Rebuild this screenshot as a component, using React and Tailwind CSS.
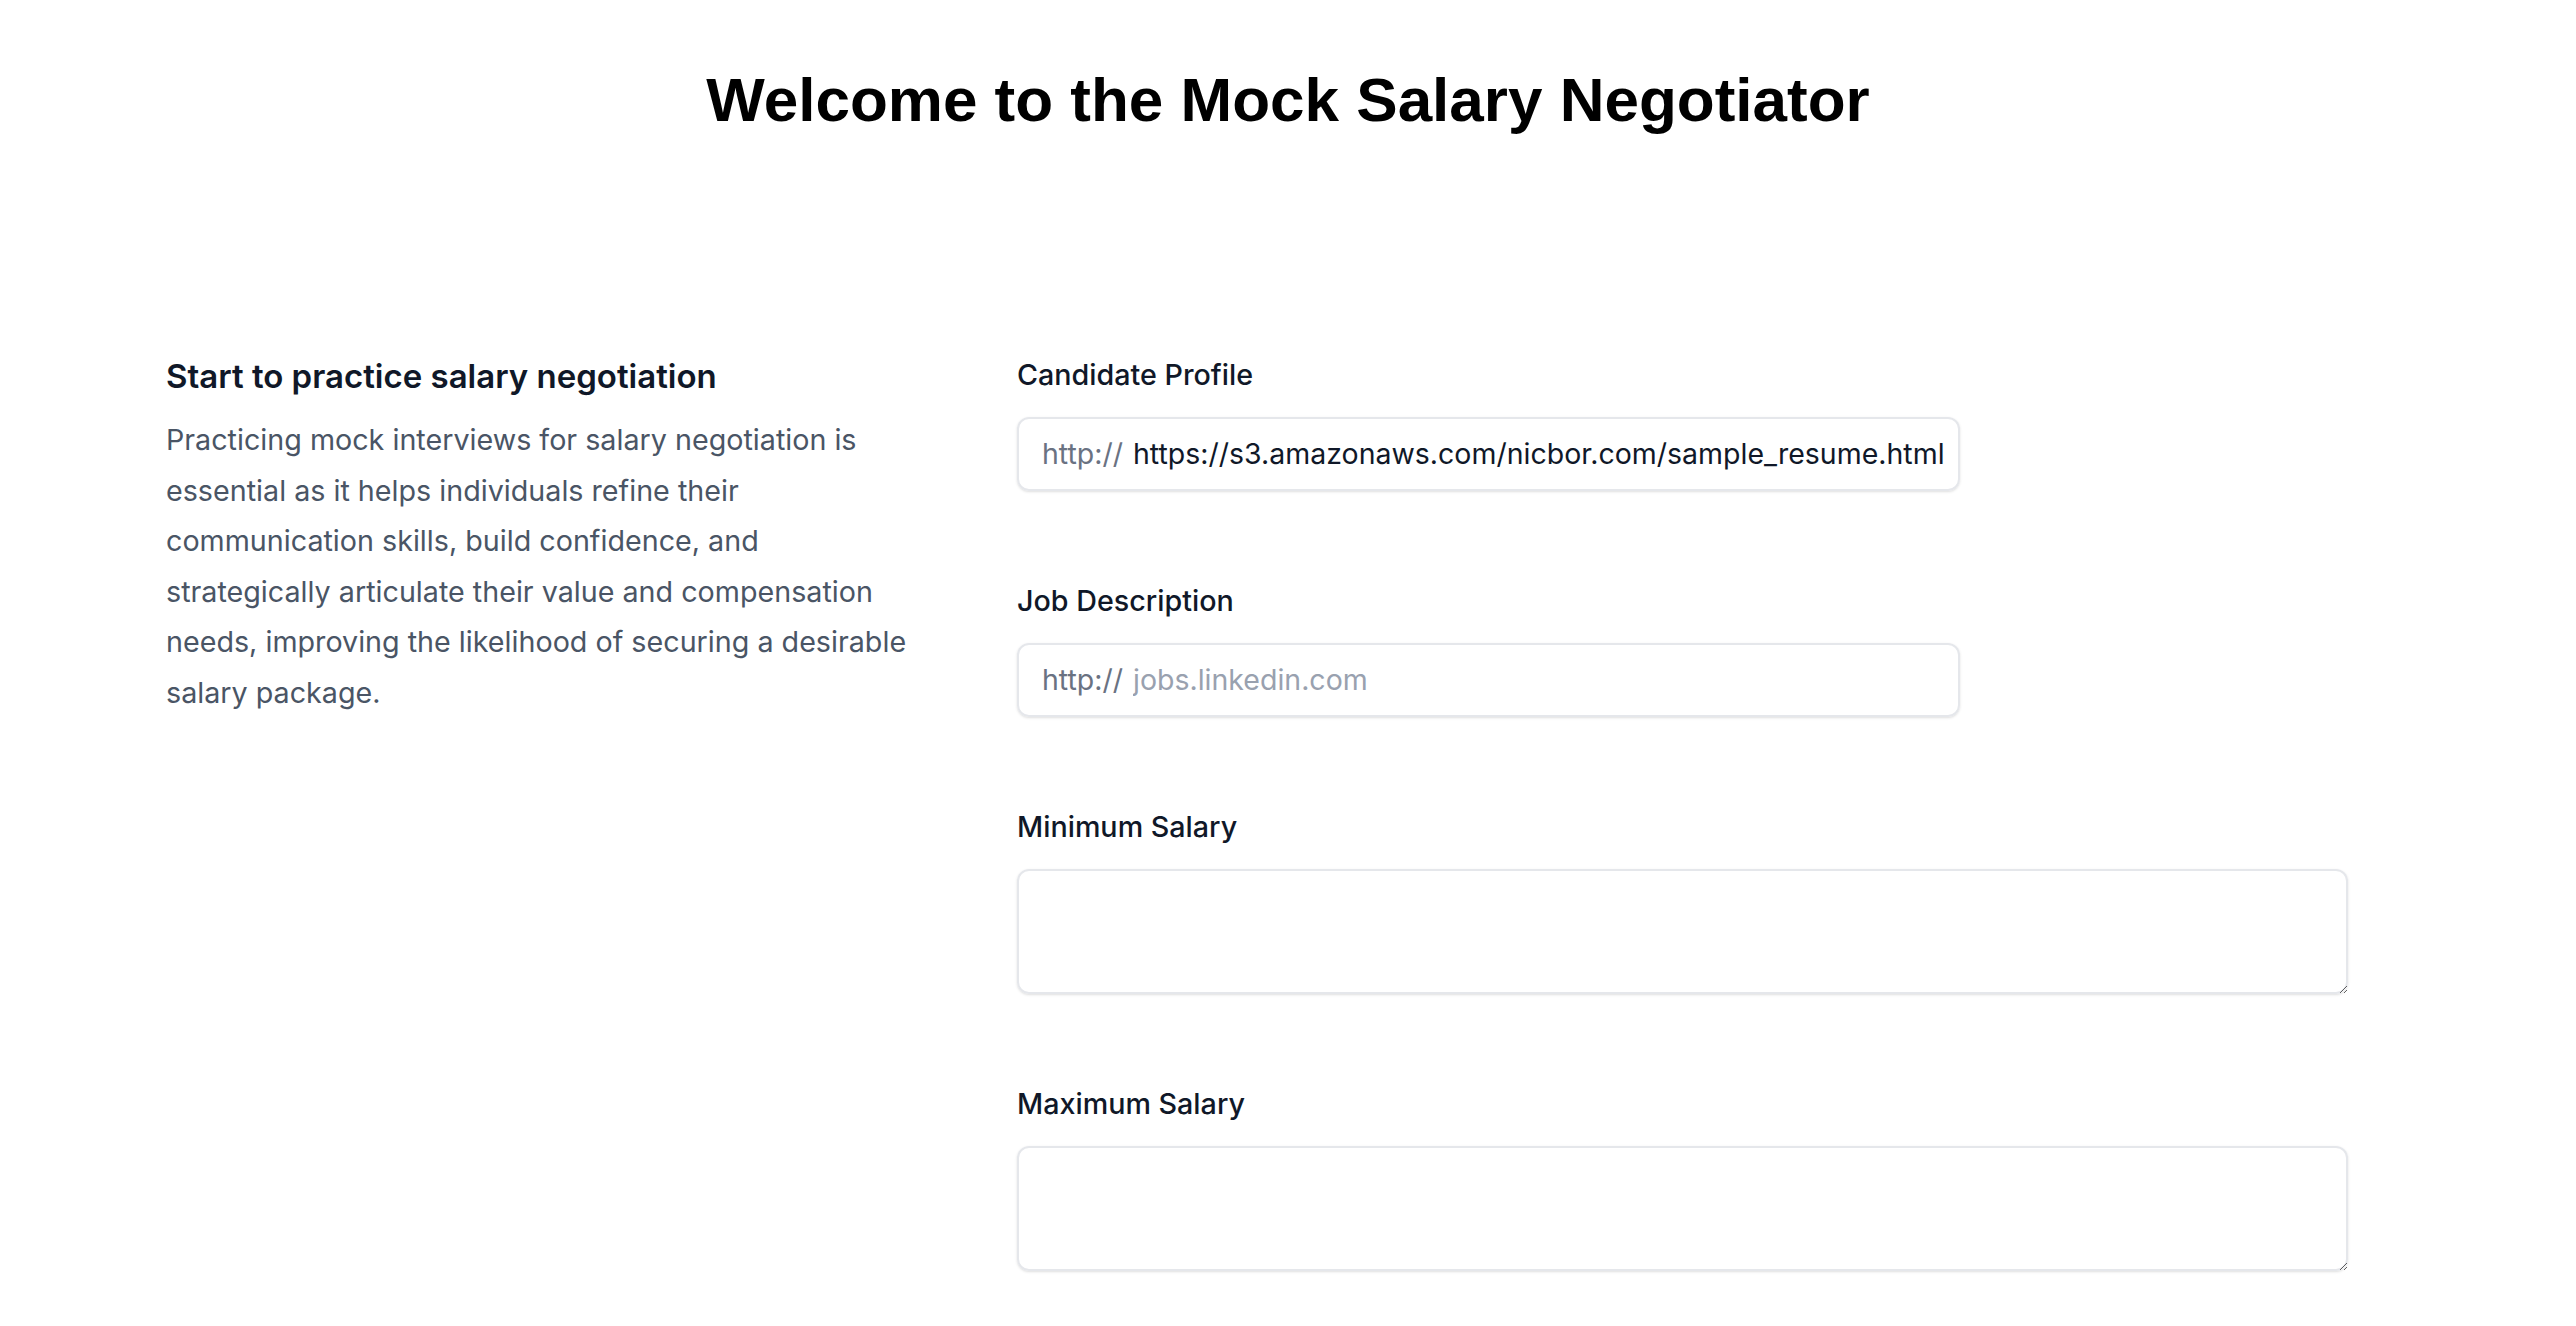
import React from 'react';

function UrlField({ label, value, placeholder }) {
  return (
    <div>
      <label className="block text-[28.7px] font-medium leading-[56px] text-gray-900">{label}</label>
      <div className="mt-[14px] flex h-[74px] w-[943px] overflow-hidden rounded-xl bg-white shadow-sm ring-2 ring-inset ring-gray-200">
        <span className="flex select-none items-center pl-[25px] text-[28.5px] text-gray-500">http://</span>
        <input
          type="text"
          defaultValue={value}
          placeholder={placeholder}
          className="block min-w-0 flex-1 border-0 bg-transparent pl-[10px] pr-3 text-[28.5px] text-gray-900 outline-none placeholder:text-gray-400"
        />
      </div>
    </div>
  );
}

function AreaField({ label }) {
  return (
    <div>
      <label className="block text-[28.7px] font-medium leading-[56px] text-gray-900">{label}</label>
      <textarea className="mt-[14px] block h-[125px] w-full rounded-xl border-0 bg-white px-[25px] py-3 text-[28.5px] text-gray-900 shadow-sm outline-none ring-2 ring-inset ring-gray-200" />
    </div>
  );
}

export default function App() {
  return (
    <div className="min-h-screen bg-white font-['Inter','Noto_Sans',sans-serif] text-gray-900">
      <h1 className="pt-[69px] text-center font-['Liberation_Sans','Arial',sans-serif] text-[62px] font-bold leading-none text-black">
        Welcome to the Mock Salary Negotiator
      </h1>

      <div className="mt-[216px] grid grid-cols-[752px_1331px] gap-x-[99px] px-[166px]">
        <div>
          <h2 className="text-[33px] font-semibold leading-[58px] text-gray-900">Start to practice salary negotiation</h2>
          <p className="mt-[10px] text-[28.7px] leading-[50.5px] text-gray-600">
            Practicing mock interviews for salary negotiation is essential as it helps individuals refine their
            communication skills, build confidence, and strategically articulate their value and compensation needs,
            improving the likelihood of securing a desirable salary package.
          </p>
        </div>

        <div className="flex flex-col gap-y-[82px]">
          <UrlField label="Candidate Profile" value="https://s3.amazonaws.com/nicbor.com/sample_resume.html" />
          <UrlField label="Job Description" placeholder="jobs.linkedin.com" />
          <AreaField label="Minimum Salary" />
          <AreaField label="Maximum Salary" />
        </div>
      </div>
    </div>
  );
}
